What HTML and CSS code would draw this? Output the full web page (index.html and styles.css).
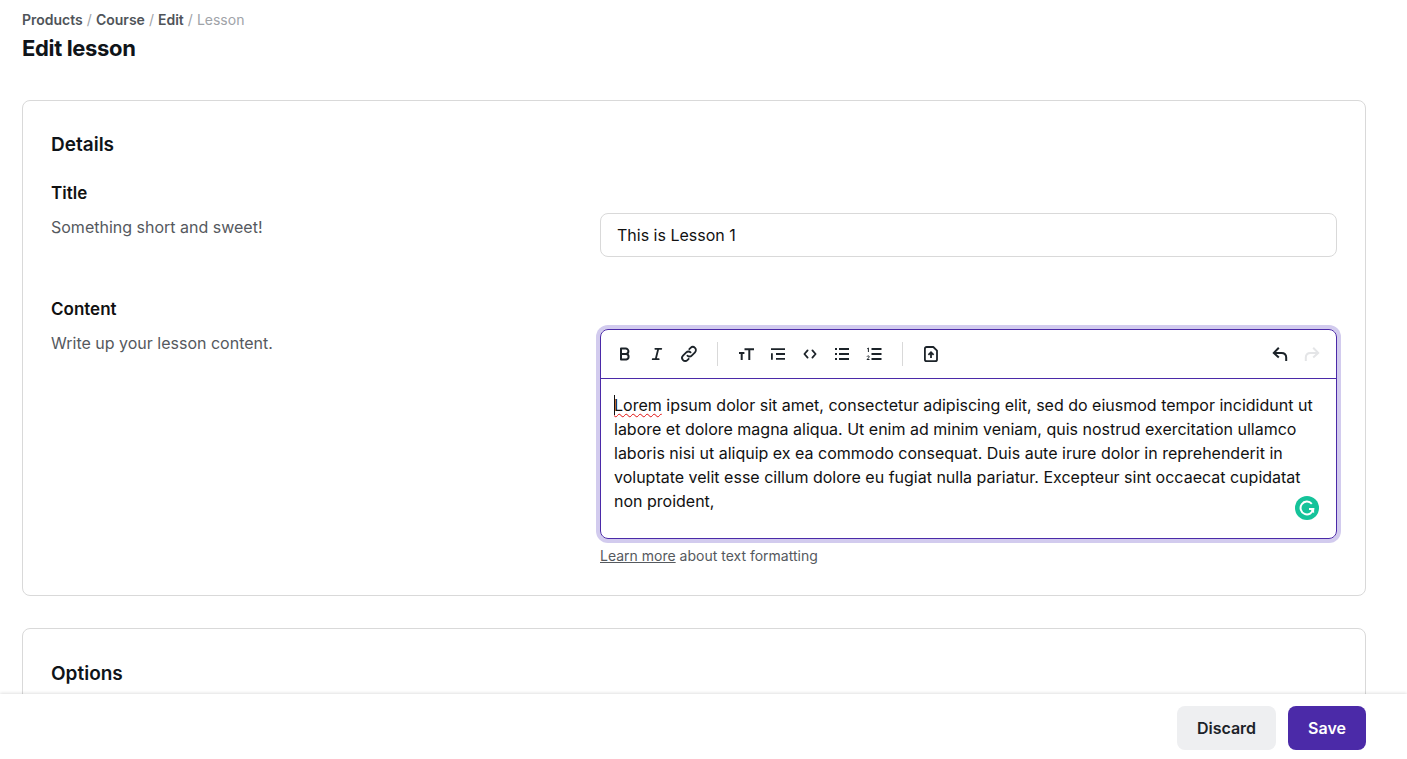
FILE: index.html
```html
<!DOCTYPE html>
<html lang="en">
<head>
<meta charset="utf-8">
<title>Edit lesson</title>
<link rel="stylesheet" href="styles.css">
</head>
<body>
<div class="app">
  <main class="main">
    <header class="page-head">
      <nav class="crumbs"><a>Products</a> <span class="sep">/</span> <a>Course</a> <span class="sep">/</span> <a>Edit</a> <span class="sep">/</span> <span class="current">Lesson</span></nav>
      <h1 class="page-title">Edit lesson</h1>
    </header>
    <section class="card">
      <h2 class="card-title">Details</h2>
      <div class="field field-first">
        <div class="field-info">
          <h3 class="field-label">Title</h3>
          <p class="field-help">Something short and sweet!</p>
        </div>
        <div class="field-control">
          <div class="text-input">This is Lesson 1</div>
        </div>
      </div>
      <div class="field">
        <div class="field-info">
          <h3 class="field-label">Content</h3>
          <p class="field-help">Write up your lesson content.</p>
        </div>
        <div class="field-control">
          <div class="editor">
            <div class="toolbar">
              <div class="tool-group">
                <svg class="icon" viewBox="0 0 16 16"><path d="M4 2.600h4.700a2.700 2.700 0 0 1 0 5.400H4zM4 8h5.300a2.800 2.800 0 0 1 0 5.500H4z" fill="none" stroke="currentColor" stroke-width="2" stroke-linejoin="round"/></svg>
                <svg class="icon" viewBox="0 0 16 16"><path d="M6.300 2.800h6M3.700 13.200h6M9.300 2.800 6.700 13.200" fill="none" stroke="currentColor" stroke-width="1.800" stroke-linecap="round"/></svg>
                <svg class="icon" viewBox="0 0 16 16"><path d="M6.400 9.600a3 3 0 0 0 4.300 0l3.300-3.300a3.100 3.100 0 0 0-4.400-4.400L8.300 3.200M9.600 6.400a3 3 0 0 0-4.300 0L2 9.700a3.100 3.100 0 0 0 4.400 4.400l1.300-1.300" fill="none" stroke="currentColor" stroke-width="1.800" stroke-linecap="round"/></svg>
              </div>
              <span class="tool-sep"></span>
              <div class="tool-group">
                <svg class="icon" viewBox="0 0 16 16"><path d="M6.500 3.300h9.500M11.300 3.300V14M1 7h5.400M3.700 7v7" fill="none" stroke="currentColor" stroke-width="2"/></svg>
                <svg class="icon" viewBox="0 0 16 16"><path d="M1 3.200h14M6 8h9M6 12.800h9M1.900 7.200v6.500" fill="none" stroke="currentColor" stroke-width="1.800"/></svg>
                <svg class="icon" viewBox="0 0 16 16"><path d="M5.600 4.400 2.400 8l3.200 3.600M10.400 4.400 13.600 8l-3.200 3.600" fill="none" stroke="currentColor" stroke-width="1.800" stroke-linecap="round" stroke-linejoin="round"/></svg>
                <svg class="icon" viewBox="0 0 16 16"><path d="M5 3h10M5 8h10M5 13h10M1 3h2M1 8h2M1 13h2" fill="none" stroke="currentColor" stroke-width="1.800"/></svg>
                <svg class="icon" viewBox="0 0 16 16"><path d="M5.500 3h10M5.500 8h10M5.500 13h10" fill="none" stroke="currentColor" stroke-width="1.800"/><path d="M1.200 2.800 2.400 2v4M1 10.600c.4-1 2.400-.9 2.300.3 0 .9-1.800 1.400-2.300 2.600h2.500" fill="none" stroke="currentColor" stroke-width="1"/></svg>
              </div>
              <span class="tool-sep"></span>
              <div class="tool-group">
                <svg class="icon" viewBox="0 0 16 16"><path d="M3.600 1h6.700l3.700 3.700v8.700a1.700 1.700 0 0 1-1.700 1.700H3.600a1.700 1.700 0 0 1-1.700-1.700V2.700A1.700 1.700 0 0 1 3.600 1z" fill="none" stroke="currentColor" stroke-width="1.800" stroke-linejoin="round"/><path d="M8 12V6.400M5.400 8.800 8 6.200l2.600 2.600" fill="none" stroke="currentColor" stroke-width="1.800"/></svg>
              </div>
              <div class="tool-group tool-history">
                <svg class="icon" viewBox="0 0 16 16"><path d="M14.200 15v-3.500c0-3-2-4.600-4.700-4.600H2.500M6.800 1.700 1.800 6.900l5 4.700" fill="none" stroke="currentColor" stroke-width="2"/></svg>
                <svg class="icon icon-redo" viewBox="0 0 16 16"><path d="M1.800 15v-3.500c0-3 2-4.600 4.700-4.600h7M9.200 1.700l5 5.200-5 4.700" fill="none" stroke="currentColor" stroke-width="2"/></svg>
              </div>
            </div>
            <div class="editor-body">
              <p class="editor-text"><span class="caret"></span><span class="misspelt">Lorem</span> ipsum dolor sit amet, consectetur adipiscing elit, sed do eiusmod tempor incididunt ut labore et dolore magna aliqua. Ut enim ad minim veniam, quis nostrud exercitation ullamco laboris nisi ut aliquip ex ea commodo consequat. Duis aute irure dolor in reprehenderit in voluptate velit esse cillum dolore eu fugiat nulla pariatur. Excepteur sint occaecat cupidatat non proident,</p>
              <svg class="grammarly" viewBox="0 0 24 24"><circle cx="12" cy="12" r="12" fill="#15c39a"/><path d="M16.800 7.800A6.400 6.400 0 1 0 18.300 13H14" fill="none" stroke="#fff" stroke-width="2"/><path d="M14.800 13h4.300v4.300z" fill="#fff"/></svg>
            </div>
          </div>
          <p class="hint"><a class="hint-link">Learn more</a> about text formatting</p>
        </div>
      </div>
    </section>
    <section class="card card-options">
      <h2 class="card-title">Options</h2>
    </section>
  </main>
  <footer class="footer">
    <button class="btn btn-grey">Discard</button>
    <button class="btn btn-primary">Save</button>
  </footer>
</div>
</body>
</html>
```

FILE: styles.css
```css
* { box-sizing: border-box; }
html, body { margin: 0; height: 100%; }
body {
  font-family: Inter, "Liberation Sans", sans-serif;
  color: #0f1419;
  background: #fff;
  overflow: hidden;
}
.app { display: flex; flex-direction: column; height: 100vh; }
.main { flex: 1; min-height: 0; overflow: hidden; padding: 11px 41px 0 22px; }
.page-head { height: 89px; }
.crumbs { font-size: 14px; line-height: 18px; font-weight: 600; color: #4f5459; }
.sep { font-weight: 400; color: #a0a3a8; margin: 0 0.5px; }
.current { font-weight: 400; color: #a0a3a8; }
.page-title { margin: 4px 0 0; font-size: 22px; line-height: 30px; font-weight: 700; color: #0f1419; letter-spacing: -0.35px; }
.card { border: 1px solid #d9d9d9; border-radius: 8px; padding: 31px 28px 29px; }
.card-options { margin-top: 32px; height: 120px; padding-top: 32px; }
.card-title { margin: 0; font-size: 19px; line-height: 26px; font-weight: 600; color: #0f1419; }
.field { display: grid; grid-template-columns: 549px 1fr; margin-top: 40px; }
.field-first { margin-top: 23px; }
.field-label { margin: 0; font-size: 17px; line-height: 24px; font-weight: 600; color: #111; }
.field-help { margin: 10px 0 0; font-size: 16px; line-height: 24px; color: #55595e; }
.field-control { padding-top: 32px; min-width: 0; }
.text-input {
  height: 44px;
  border: 1px solid #d9d9d9;
  border-radius: 8px;
  padding: 0 16px;
  font-size: 16px;
  line-height: 42px;
  color: #111;
}
.editor {
  display: flex;
  flex-direction: column;
  height: 210px;
  border: 1px solid #4b2aa8;
  border-radius: 8px;
  box-shadow: 0 0 0 4px #d2cbee;
}
.toolbar {
  flex: none;
  display: flex;
  align-items: center;
  height: 49px;
  padding: 0 16px;
  border-bottom: 1px solid #4b2aa8;
  color: #1c2329;
}
.tool-group { display: flex; align-items: center; gap: 16px; }
.tool-sep { width: 1px; height: 24px; background: #d9d9d9; margin: 0 20px; }
.tool-history { margin-left: auto; }
.icon { width: 16px; height: 16px; display: block; overflow: visible; }
.icon-redo { color: #e4e5e7; }
.editor-body { flex: 1; position: relative; padding: 14px 13px; }
.editor-text { margin: 0; font-size: 16px; line-height: 24px; color: #111; }
.caret { position: absolute; width: 1px; height: 20px; background: #111; margin-top: 2px; }
.misspelt { text-decoration: underline wavy #e01010 1px; text-underline-offset: 2px; }
.grammarly { position: absolute; right: 17px; bottom: 18px; width: 24px; height: 24px; }
.hint { margin: 7px 0 0; font-size: 14px; line-height: 20px; color: #55595e; }
.hint-link { text-decoration: underline; }
.footer {
  flex: none;
  height: 65px;
  display: flex;
  justify-content: flex-end;
  align-items: flex-start;
  gap: 12px;
  padding: 12px 41px 0 0;
  background: #fff;
  box-shadow: 0 -1px 3px rgba(0,0,0,.12);
  position: relative;
}
.btn {
  height: 44px;
  border: 0;
  border-radius: 8px;
  font: 600 16px/24px Inter, "Liberation Sans", sans-serif;
  padding: 0 20px;
}
.btn-grey { background: #eeeff1; color: #1c2329; }
.btn-primary { background: #4b2aa8; color: #fff; }
```
